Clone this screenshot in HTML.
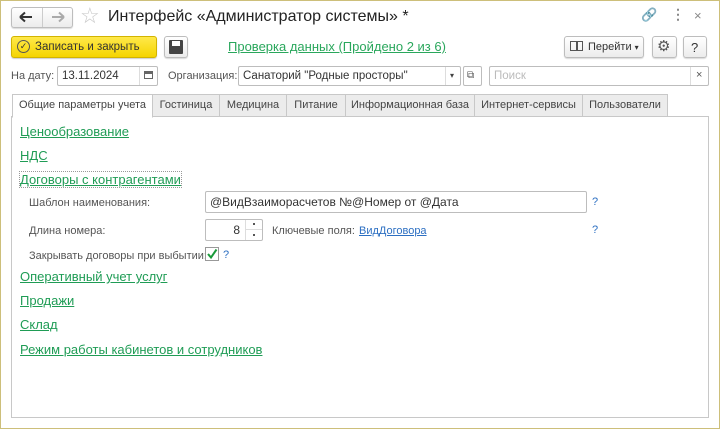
<!DOCTYPE html>
<html><head><meta charset="utf-8"><style>
*{box-sizing:border-box;margin:0;padding:0}
body{width:720px;height:429px;background:#fff;font-family:"Liberation Sans",Arial,sans-serif;font-size:11px;color:#4d4d4d;position:relative;overflow:hidden}
.frame{position:absolute;left:0;top:0;width:720px;height:429px;border:1px solid #cdbf7a}
.a{position:absolute;white-space:nowrap}
.btn{position:absolute;border:1px solid #bdbdbd;border-radius:3px;background:linear-gradient(#fff,#ececec);box-shadow:0 1px 1px rgba(0,0,0,.15)}
.inp{position:absolute;border:1px solid #bdbdbd;border-radius:2px;background:#fff;color:#333;font-size:11.5px;padding-left:4px;line-height:18px;white-space:nowrap;overflow:hidden}
.lnk{position:absolute;color:#1f9c55;text-decoration:underline;font-size:13px;white-space:nowrap}
.tab{position:absolute;top:94px;height:23px;border:1px solid #c8c8c8;background:#ececec;color:#444;font-size:11px;text-align:center;line-height:21px;white-space:nowrap}
.q{position:absolute;color:#2c6fc2;font-size:11px}
</style></head><body>
<div class="frame"></div>
<div class="btn" style="left:11px;top:7px;width:62px;height:21px"></div>
<div class="a" style="left:42px;top:8px;width:1px;height:19px;background:#ccc"></div>
<svg class="a" style="left:19px;top:11px" width="14" height="12"><path d="M1 6H13M1 6L6 1.5M1 6L6 10.5" stroke="#333" stroke-width="2" fill="none"/></svg>
<svg class="a" style="left:51px;top:11px" width="14" height="12"><path d="M1 6H13M13 6L8 1.5M13 6L8 10.5" stroke="#aaa" stroke-width="2" fill="none"/></svg>
<div class="a" style="left:80px;top:3px;font-size:22px;color:#c8c8c8">☆</div>
<div class="a" style="left:108px;top:8px;font-size:16px;color:#222">Интерфейс «Администратор системы» *</div>
<div class="a" style="left:641px;top:7px;font-size:13px;color:#aaa">🔗</div>
<div class="a" style="left:671px;top:6px;font-size:14px;color:#888;font-weight:bold">⋮</div>
<div class="a" style="left:694px;top:8px;font-size:13px;color:#888">×</div>

<div class="a" style="left:11px;top:36px;width:146px;height:22px;background:linear-gradient(#ffe94a,#f5d400);border:1px solid #d2b400;border-radius:3px;box-shadow:0 1px 1px rgba(0,0,0,.2)"></div>
<div class="a" style="left:17px;top:40px;width:13px;height:13px;border:1.5px solid #555;border-radius:50%;font-size:9px;line-height:10px;text-align:center;color:#333">✓</div>
<div class="a" style="left:35px;top:41px;font-size:11.5px;color:#333">Записать и закрыть</div>
<div class="btn" style="left:164px;top:36px;width:24px;height:22px"></div>
<div class="a" style="left:169px;top:40px;width:14px;height:14px;background:#444;border-radius:1px"></div>
<div class="a" style="left:172px;top:41px;width:8px;height:5px;background:#fff"></div>
<div class="lnk" style="left:228px;top:39px;font-size:13px;color:#2aa75c">Проверка данных (Пройдено 2 из 6)</div>
<div class="btn" style="left:564px;top:36px;width:80px;height:22px"></div>
<div class="a" style="left:570px;top:41px;width:13px;height:10px;border:1.5px solid #555"></div>
<div class="a" style="left:576px;top:41px;width:1.5px;height:10px;background:#555"></div>
<div class="a" style="left:588px;top:41px;font-size:11px;color:#333">Перейти <span style="font-size:8px">▾</span></div>
<div class="btn" style="left:652px;top:36px;width:25px;height:22px"></div>
<div class="a" style="left:657px;top:37px;font-size:15px;color:#555">⚙</div>
<div class="btn" style="left:683px;top:36px;width:24px;height:22px"></div>
<div class="a" style="left:691px;top:40px;font-size:13px;color:#333">?</div>

<div class="a" style="left:11px;top:70px;color:#555">На дату:</div>
<div class="inp" style="left:57px;top:66px;width:101px;height:20px">13.11.2024</div>
<div class="a" style="left:139px;top:67px;width:1px;height:18px;background:#ddd"></div>
<div class="a" style="left:144px;top:71px;width:9px;height:8px;border:1.5px solid #666;border-top-width:3px"></div>
<div class="a" style="left:168px;top:70px;color:#555">Организация:</div>
<div class="inp" style="left:238px;top:66px;width:223px;height:20px">Санаторий "Родные просторы"</div>
<div class="a" style="left:445px;top:67px;width:1px;height:18px;background:#ddd"></div>
<div class="a" style="left:450px;top:71px;font-size:8px;color:#444">▾</div>
<div class="inp" style="left:463px;top:66px;width:19px;height:20px"></div>
<div class="a" style="left:467px;top:70px;font-size:10px;color:#555">⧉</div>
<div class="inp" style="left:489px;top:66px;width:220px;height:20px;color:#bbb">Поиск</div>
<div class="a" style="left:690px;top:67px;width:1px;height:18px;background:#ddd"></div>
<div class="a" style="left:696px;top:69px;font-size:11px;color:#555">×</div>

<div class="a" style="left:11px;top:116px;width:698px;height:302px;border:1px solid #c8c8c8"></div>
<div class="tab" style="left:12px;width:141px;background:#fff;border-bottom-color:#fff;height:24px">Общие параметры учета</div>
<div class="tab" style="left:152px;width:68px">Гостиница</div>
<div class="tab" style="left:219px;width:68px">Медицина</div>
<div class="tab" style="left:286px;width:60px">Питание</div>
<div class="tab" style="left:345px;width:130px">Информационная база</div>
<div class="tab" style="left:474px;width:109px">Интернет-сервисы</div>
<div class="tab" style="left:582px;width:86px">Пользователи</div>

<div class="lnk" style="left:20px;top:124px">Ценообразование</div>
<div class="lnk" style="left:20px;top:148px">НДС</div>
<div class="lnk" style="left:20px;top:172px;outline:1px dotted #999">Договоры с контрагентами</div>
<div class="a" style="left:29px;top:197px;color:#555">Шаблон наименования:</div>
<div class="inp" style="left:205px;top:191px;width:382px;height:22px;line-height:20px;font-size:12px">@ВидВзаиморасчетов №@Номер от @Дата</div>
<div class="q" style="left:592px;top:196px">?</div>
<div class="a" style="left:29px;top:225px;color:#555">Длина номера:</div>
<div class="inp" style="left:205px;top:219px;width:58px;height:22px;text-align:right;padding-right:22px;line-height:20px;font-size:12px">8</div>
<div class="a" style="left:245px;top:220px;width:1px;height:20px;background:#ddd"></div>
<div class="a" style="left:246px;top:229px;width:16px;height:1px;background:#ddd"></div>
<div class="a" style="left:253px;top:223px;width:2px;height:2px;background:#555"></div>
<div class="a" style="left:253px;top:234px;width:2px;height:2px;background:#555"></div>
<div class="a" style="left:272px;top:225px;color:#555">Ключевые поля:</div>
<div class="a" style="left:359px;top:225px;color:#2c6fc2;text-decoration:underline">ВидДоговора</div>
<div class="q" style="left:592px;top:224px">?</div>
<div class="a" style="left:29px;top:250px;color:#555">Закрывать договоры при выбытии:</div>
<div class="a" style="left:205px;top:247px;width:14px;height:14px;border:1px solid #999;background:#fff"></div>
<svg class="a" style="left:206px;top:248px" width="12" height="12"><path d="M2 6L5 9.5L10.5 1.5" stroke="#1a9a3a" stroke-width="2" fill="none"/></svg>
<div class="q" style="left:223px;top:249px">?</div>
<div class="lnk" style="left:20px;top:269px">Оперативный учет услуг</div>
<div class="lnk" style="left:20px;top:293px">Продажи</div>
<div class="lnk" style="left:20px;top:317px">Склад</div>
<div class="lnk" style="left:20px;top:342px">Режим работы кабинетов и сотрудников</div>
</body></html>
